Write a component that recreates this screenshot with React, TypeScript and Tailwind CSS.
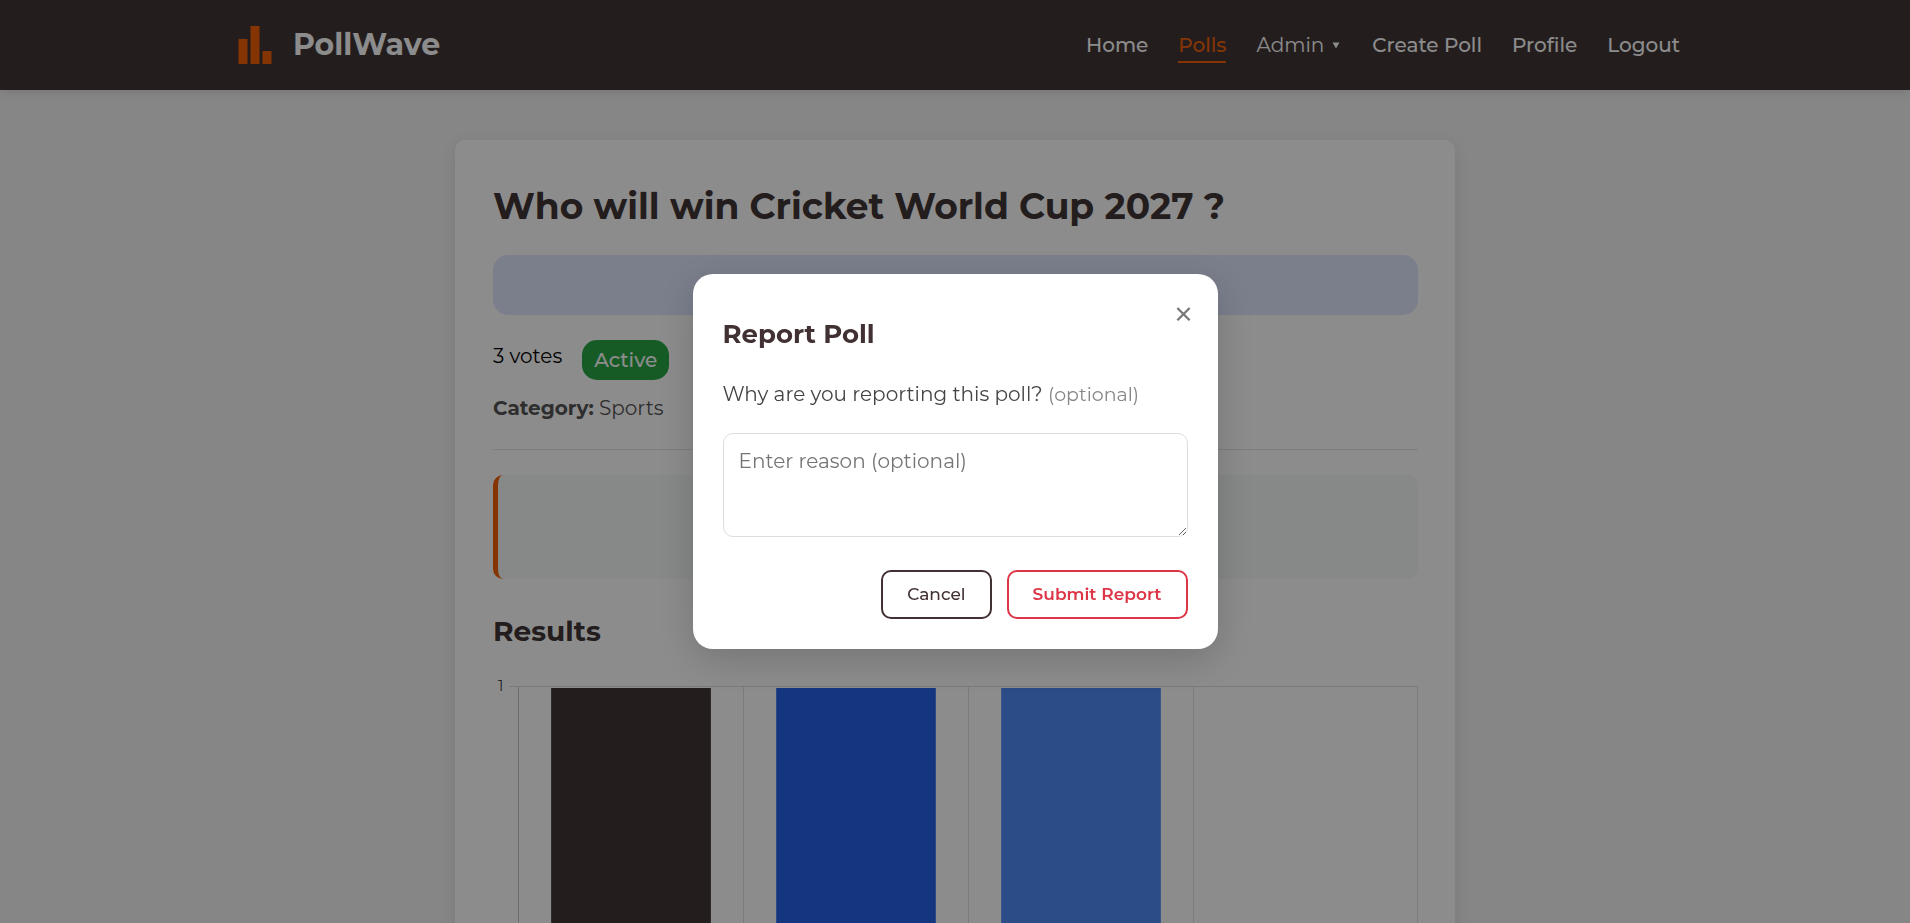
import React from "react";

const links = ["Create Poll", "Profile", "Logout"];

const bars = [
  { x: 58, fill: "#413536", stroke: "#5c5152" },
  { x: 283, fill: "#2563eb", stroke: "#4f83f0" },
  { x: 508, fill: "#4f8af5", stroke: "#6c9df8" },
];

const gridLines = [250, 475, 700, 924];

function Logo() {
  return (
    <svg className="size-[50px]" viewBox="0 0 50 50" fill="#f26207" aria-hidden="true">
      <rect x="8.5" y="19" width="9" height="25" />
      <rect x="20.5" y="6" width="9" height="38" />
      <rect x="32.5" y="31" width="9" height="13" />
    </svg>
  );
}

function NavBar() {
  return (
    <header className="h-[90px] bg-[#413637] shadow-[0_2px_10px_rgba(0,0,0,0.12)]">
      <div className="mx-auto flex h-full max-w-[1450px] items-center justify-between">
        <a href="#" className="flex items-center gap-[13px] text-[30px] leading-10 font-bold text-white">
          <Logo />
          PollWave
        </a>
        <nav className="flex items-center gap-[30px] text-xl leading-[30px] font-medium text-white">
          <a href="#">Home</a>
          <a href="#" className="relative text-[#f26207]">
            Polls
            <span className="absolute inset-x-0 -bottom-[3px] h-0.5 bg-[#f26207]" />
          </a>
          <button type="button" className="flex items-center gap-2 font-normal">
            Admin
            <svg className="h-[7px] w-2.5" viewBox="0 0 10 7" fill="currentColor" aria-hidden="true">
              <path d="M0.5 0.5h7L4 6.5z" />
            </svg>
          </button>
          {links.map((label) => (
            <a key={label} href="#">
              {label}
            </a>
          ))}
        </nav>
      </div>
    </header>
  );
}

function ResultsChart() {
  return (
    <svg className="mt-5 w-full" viewBox="0 0 925 530" role="img" aria-label="Votes per option">
      <text x="5" y="22" fontSize="15" fill="#444444">
        1
      </text>
      <g shapeRendering="crispEdges">
        <path d="M16 17.5H925" stroke="#dedede" />
        <path d="M25.5 18V530" stroke="#c8c8c8" />
        {gridLines.map((x) => (
          <path key={x} d={`M${x + 0.5} 18V530`} stroke="#e0e0e0" />
        ))}
        {bars.map((bar) => (
          <g key={bar.x}>
            <rect x={bar.x} y="19" width="160" height="511" fill={bar.fill} />
            <path d={`M${bar.x + 0.5} 19V530M${bar.x + 159.5} 19V530`} stroke={bar.stroke} />
          </g>
        ))}
      </g>
    </svg>
  );
}

function PollCard() {
  return (
    <article className="mx-auto mt-[50px] w-full max-w-[1000px] rounded-[10px] bg-white pt-11 pr-[37px] pb-10 pl-[38px] shadow-[0_4px_20px_rgba(0,0,0,0.1)]">
      <h1 className="text-[36px] leading-[44px] font-bold text-[#413536]">
        Who will win Cricket World Cup 2027 ?
      </h1>
      <div className="mt-[27px] h-[60px] rounded-[15px] bg-[#e0e7ff]" />
      <div className="mt-[25px] flex items-start gap-5 text-xl">
        <span className="leading-8 text-black">3 votes</span>
        <span className="rounded-[15px] bg-[#28a745] px-3 leading-10 font-medium text-white">Active</span>
      </div>
      <p className="mt-[13px] border-b border-[#e5e5e5] pb-[26px] text-xl leading-[30px] text-[#555555]">
        <strong className="font-bold">Category:</strong> Sports
      </p>
      <div className="mt-[25px] h-[104px] rounded-[10px] border-l-[5px] border-[#f26207] bg-[#f6faf8]" />
      <h2 className="mt-[34px] text-[28px] leading-9 font-bold text-[#413536]">Results</h2>
      <ResultsChart />
    </article>
  );
}

function ReportDialog() {
  return (
    <div className="fixed inset-0 flex items-center justify-center bg-black/45">
      <section
        role="dialog"
        aria-modal="true"
        aria-labelledby="report-title"
        className="relative w-full max-w-[525px] rounded-[20px] bg-white px-[30px] pt-11 pb-[30px] shadow-[0_10px_40px_rgba(0,0,0,0.18)]"
      >
        <button
          type="button"
          aria-label="Close"
          className="absolute top-5 right-[14px] size-10 text-center text-[40px] leading-10 text-[#777777]"
        >
          ×
        </button>
        <h2 id="report-title" className="text-[26px] leading-8 font-bold text-[#413132]">
          Report Poll
        </h2>
        <label htmlFor="reason" className="mt-[29px] block text-xl leading-[30px] text-[#444444]">
          Why are you reporting this poll?{" "}
          <span className="text-[19px] leading-none text-[#888888]">(optional)</span>
        </label>
        <textarea
          id="reason"
          placeholder="Enter reason (optional)"
          className="mt-6 block h-[104px] w-full resize-y rounded-[10px] border border-[#dddddd] px-[15px] py-3 text-xl leading-[30px] placeholder:text-[#757575]"
        />
        <div className="mt-[33px] flex justify-end gap-[15px] text-[17px]">
          <button
            type="button"
            className="rounded-[10px] border-2 border-[#413132] px-6 leading-[45px] font-medium text-[#413132]"
          >
            Cancel
          </button>
          <button
            type="button"
            className="rounded-[10px] border-2 border-[#dc3545] px-6 leading-[45px] font-semibold text-[#dc3545]"
          >
            Submit Report
          </button>
        </div>
      </section>
    </div>
  );
}

export default function App() {
  return (
    <div className="h-screen overflow-hidden bg-[#f5f5f5] font-[Montserrat,Inter,sans-serif]">
      <NavBar />
      <main>
        <PollCard />
      </main>
      <ReportDialog />
    </div>
  );
}
